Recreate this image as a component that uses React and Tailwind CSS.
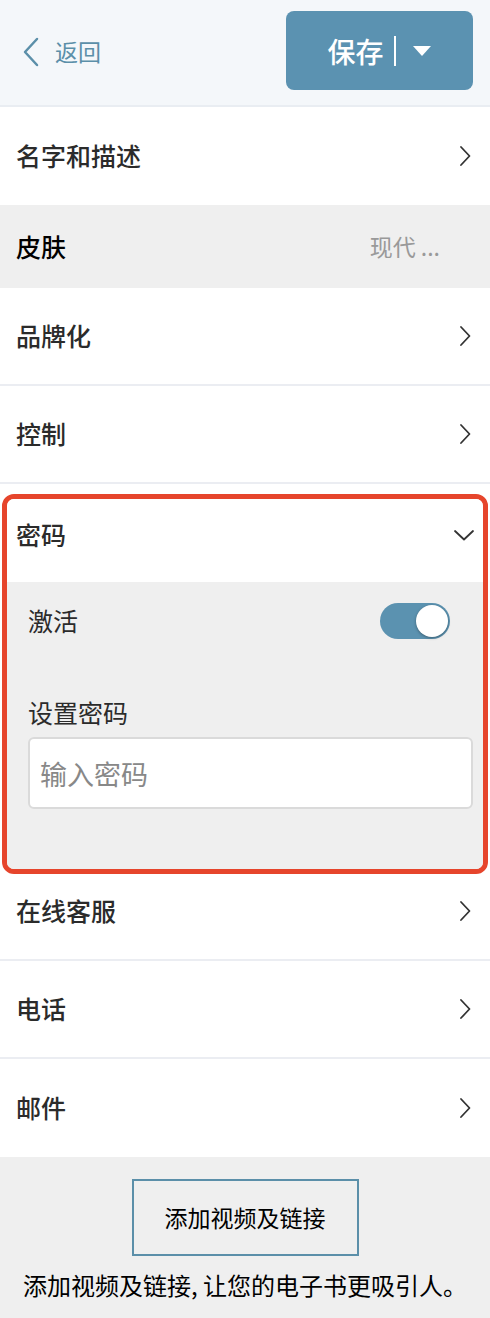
import { useState } from 'react'

const font = { fontFamily: '"Noto Sans CJK SC", "Noto Sans", sans-serif' }

function ChevronRight() {
  return (
    <svg width="14" height="22" viewBox="0 0 14 22" fill="none" className="shrink-0">
      <path d="M3 2l8.5 9L3 20" stroke="#333" strokeWidth="1.8" strokeLinecap="round" strokeLinejoin="round" />
    </svg>
  )
}

function ChevronDown() {
  return (
    <svg width="22" height="14" viewBox="0 0 22 14" fill="none" className="shrink-0">
      <path d="M2 3l9 8.5L20 3" stroke="#333" strokeWidth="1.8" strokeLinecap="round" strokeLinejoin="round" />
    </svg>
  )
}

function Row({ label, last, className = '' }) {
  return (
    <div className={`h-[98px] flex items-center justify-between pl-4 pr-[18px] bg-white ${last ? '' : 'border-b-2 border-[#ebedf2]'} ${className}`}>
      <span className="text-[25px] text-[#2b2b2b] font-medium">{label}</span>
      <ChevronRight />
    </div>
  )
}

export default function App() {
  const [active, setActive] = useState(true)

  return (
    <div className="w-[490px] min-h-[1318px] bg-white flex flex-col" style={font}>
      {/* Header */}
      <div className="h-[107px] bg-[#f4f7fa] border-b-2 border-[#e9edf2] flex items-center justify-between pl-[22px] pr-[17px] pb-[2px]">
        <button className="flex items-center gap-[15px] text-[#5b8fa9]">
          <svg width="18" height="30" viewBox="0 0 18 30" fill="none">
            <path d="M15 2L3 15l12 13" stroke="#5b8fa9" strokeWidth="2.5" strokeLinecap="round" strokeLinejoin="round" />
          </svg>
          <span className="text-[23px]">返回</span>
        </button>
        <button className="w-[187px] h-[79px] rounded-lg bg-[#5b92b1] flex items-center justify-center gap-[10px] text-white mt-[-2px]">
          <span className="text-[28px] font-medium">保存</span>
          <span className="w-[2px] h-[30px] bg-white" />
          <svg width="20" height="12" viewBox="0 0 20 12" className="ml-[6px]">
            <path d="M1 1h18L10 11z" fill="#fff" />
          </svg>
        </button>
      </div>

      <Row label="名字和描述" last />

      <div className="h-[83px] bg-[#efefef] flex items-center justify-between pl-4 pr-[50px]">
        <span className="text-[25px] text-black font-medium">皮肤</span>
        <span className="text-[23px] text-[#999]">现代 ...</span>
      </div>

      <Row label="品牌化" />
      <Row label="控制" />

      {/* Password section (highlighted) */}
      <div className="relative z-10 mt-[10px] mx-[2px] border-[5px] border-[#e6452c] rounded-xl overflow-hidden">
        <div className="h-[83px] bg-white flex items-center justify-between pl-[9px] pr-2 pb-[12px]">
          <span className="text-[25px] text-[#2b2b2b] font-medium">密码</span>
          <ChevronDown />
        </div>
        <div className="bg-[#efefef] pl-[21px] pr-[10px] pt-[18px] pb-[60px]">
          <div className="flex items-center justify-between h-[42px]">
            <span className="text-[25px] text-[#2b2b2b]">激活</span>
            <button
              onClick={() => setActive(a => !a)}
              className={`w-[70px] h-[36px] rounded-full flex items-center px-[2px] mr-[23px] ${active ? 'bg-[#5b92b0] justify-end' : 'bg-[#ccc] justify-start'}`}
            >
              <span className="w-[32px] h-[32px] rounded-full bg-white shadow-[0_1px_3px_rgba(0,0,0,0.35)]" />
            </button>
          </div>
          <div className="mt-[53px] text-[25px] text-[#2b2b2b] leading-[34px]">设置密码</div>
          <input
            placeholder="输入密码"
            className="mt-[8px] w-full h-[72px] rounded-md border-2 border-[#dadada] bg-white px-[10px] text-[27px] text-[#333] placeholder:text-[#888] outline-none"
          />
        </div>
      </div>

      <Row label="在线客服" className="-mt-[11px]" />
      <Row label="电话" />
      <Row label="邮件" last />

      {/* Footer */}
      <div className="flex-1 bg-[#efefef] flex flex-col items-center pt-[22px] pb-[20px]">
        <button className="w-[227px] h-[77px] border-2 border-[#5b8fa9] text-[23px] text-black">
          添加视频及链接
        </button>
        <p className="mt-[11px] text-[24px] text-black">添加视频及链接, 让您的电子书更吸引人。</p>
      </div>
    </div>
  )
}
